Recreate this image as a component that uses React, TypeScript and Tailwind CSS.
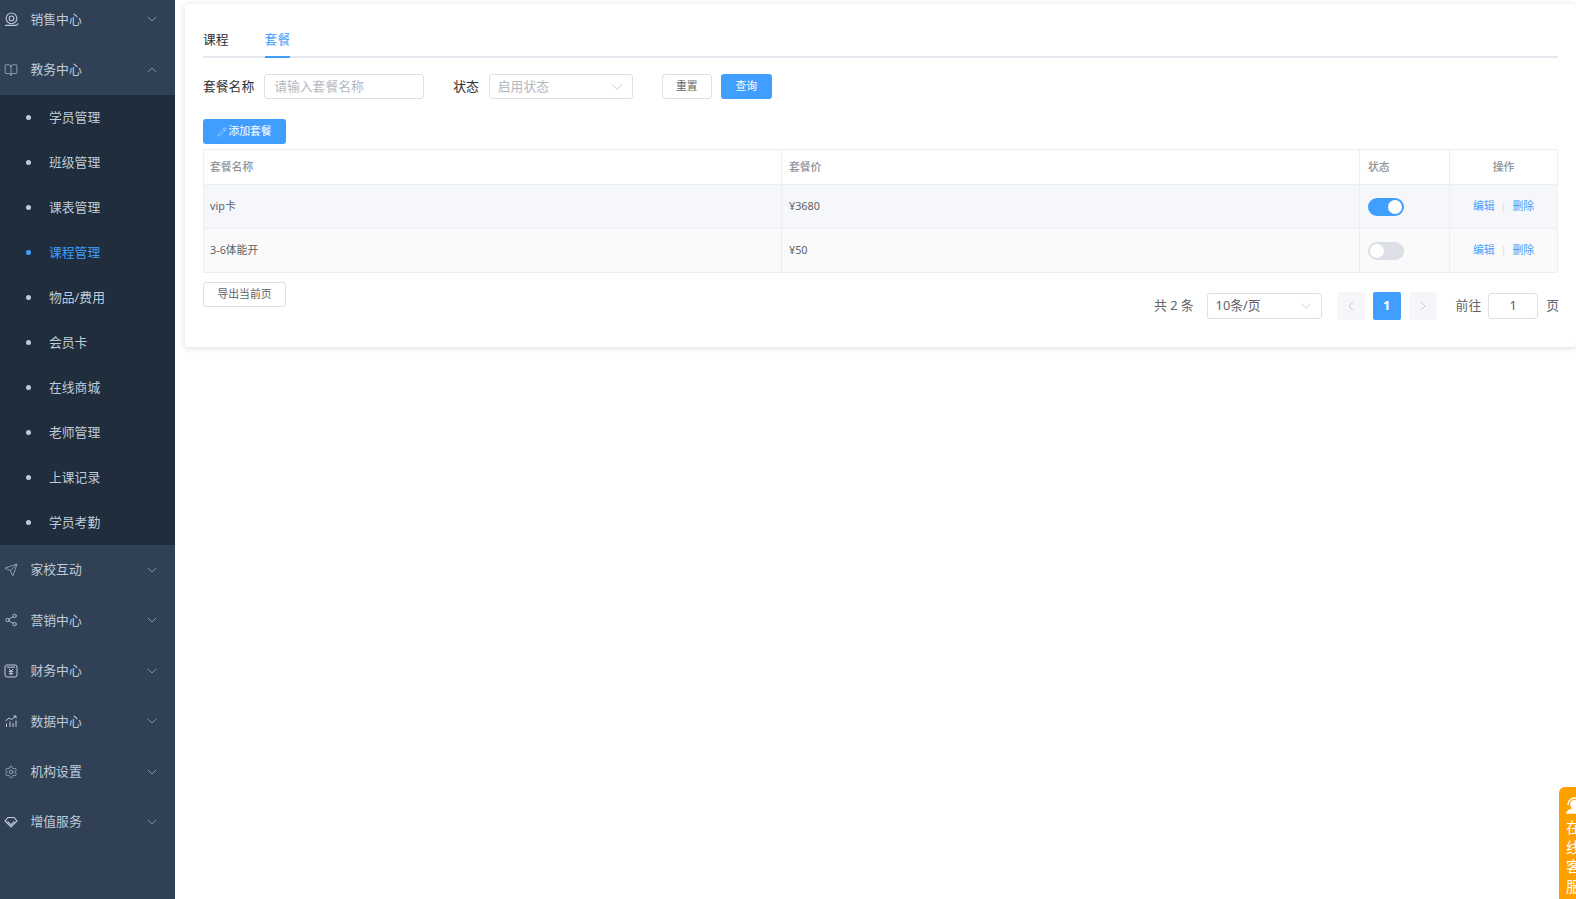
import React from "react";
import { ChevronDown, ChevronUp, ChevronLeft, ChevronRight, BookOpen, Send, Share2, Settings, Pencil } from "lucide-react";

const font = { fontFamily: '"Noto Sans", "Noto Sans CJK SC", sans-serif' };

const HeadIcon = () => (
  <svg width="15" height="15" viewBox="0 0 14 14" fill="none" stroke="currentColor" strokeWidth="1">
    <circle cx="7" cy="6" r="5" />
    <circle cx="7" cy="6" r="2.2" />
    <path d="M1 12.5h9.5c1.5 0 2.5-.8 2.5-2" />
  </svg>
);

const YenIcon = () => (
  <svg width="14" height="14" viewBox="0 0 14 14" fill="none" stroke="currentColor" strokeWidth="1">
    <rect x="1" y="1" width="12" height="12" rx="2" />
    <path d="M3 3.2h8M5 5l2 2.2L9 5M4.8 7.6h4.4M4.8 9.6h4.4M7 7.2v4" />
  </svg>
);

const ChartIcon = () => (
  <svg width="14" height="14" viewBox="0 0 14 14" fill="none" stroke="currentColor" strokeWidth="1">
    <path d="M1.5 7l3.5-3 2.5 1.5L12 2M9.5 2H12v2.5M2.5 13V9.5M6 13V7.5M9 13V9M12 13V6.5" />
  </svg>
);

const GemIcon = () => (
  <svg width="14" height="14" viewBox="0 0 14 14" fill="none" stroke="currentColor" strokeWidth="1.1">
    <path d="M4 2.5h6L13 6l-6 6-6-6z" />
    <path d="M3.5 6.5L7 10l3.5-3.5" />
  </svg>
);

const SupportIcon = () => (
  <svg width="18" height="18" viewBox="0 0 18 18" fill="none" stroke="white" strokeWidth="1.6">
    <path d="M2 9c0-4 3-7 7-7s7 3 7 7" />
    <circle cx="9" cy="8.5" r="4" fill="white" />
    <path d="M1 17c1-3 4-4 8-4s7 1 8 4z" fill="white" />
  </svg>
);

const thin = { size: 14, strokeWidth: 1.1 };

const topMenus = [
  { name: "销售中心", icon: <HeadIcon /> },
  { name: "教务中心", icon: <BookOpen {...thin} />, open: true },
];

const subMenus = ["学员管理", "班级管理", "课表管理", "课程管理", "物品/费用", "会员卡", "在线商城", "老师管理", "上课记录", "学员考勤"];

const bottomMenus = [
  { name: "家校互动", icon: <Send {...thin} /> },
  { name: "营销中心", icon: <Share2 size={14} strokeWidth={1.4} /> },
  { name: "财务中心", icon: <YenIcon /> },
  { name: "数据中心", icon: <ChartIcon /> },
  { name: "机构设置", icon: <Settings {...thin} /> },
  { name: "增值服务", icon: <GemIcon /> },
];

const MenuRow = ({ name, icon, open }: any) => (
  <div className="flex items-center h-[50.4px] pl-[4px] pr-[15px] text-[12.8px] text-[#bfcbd9]">
    <span className="w-[26.5px] flex items-center">{icon}</span>
    <span className="flex-1">{name}</span>
    {open ? <ChevronUp size={16} strokeWidth={0.9} /> : <ChevronDown size={16} strokeWidth={0.9} />}
  </div>
);

const Sidebar = () => (
  <aside className="w-[175px] shrink-0 h-full bg-[#304156] overflow-hidden">
    <div className="-mt-[6px]">
      {topMenus.map((m) => (
        <MenuRow key={m.name} {...m} />
      ))}
      <div className="bg-[#1f2d3d]">
        {subMenus.map((s) => (
          <div
            key={s}
            className={`flex items-center h-[45px] pl-[26px] text-[12.8px] ${s === "课程管理" ? "text-[#409eff]" : "text-[#bfcbd9]"}`}
          >
            <span className={`w-[5px] h-[5px] rounded-full mr-[18px] ${s === "课程管理" ? "bg-[#409eff]" : "bg-[#bfcbd9]"}`}></span>
            {s}
          </div>
        ))}
      </div>
      {bottomMenus.map((m) => (
        <MenuRow key={m.name} {...m} />
      ))}
    </div>
  </aside>
);

const rows = [
  { name: "vip卡", price: "¥3680", on: true, bg: "bg-[#f5f7fa]" },
  { name: "3-6体能开", price: "¥50", on: false, bg: "bg-[#fafafa]" },
];

const Table = () => (
  <table className="w-[1355px] table-fixed border-collapse text-[10.8px] text-[#606266]">
    <thead>
      <tr className="h-[35px] text-[#909399] font-medium">
        <th className="w-[578px] border border-[#ebeef5] px-[6px] text-left font-medium">套餐名称</th>
        <th className="w-[578px] border border-[#ebeef5] px-[7px] text-left font-medium">套餐价</th>
        <th className="w-[90px] border border-[#ebeef5] px-[8px] text-left font-medium">状态</th>
        <th className="border border-[#ebeef5] text-center font-medium">操作</th>
      </tr>
    </thead>
    <tbody>
      {rows.map((r) => (
        <tr key={r.name} className={`h-[44px] ${r.bg}`}>
          <td className="border border-[#ebeef5] px-[6px]">{r.name}</td>
          <td className="border border-[#ebeef5] px-[7px]">{r.price}</td>
          <td className="border border-[#ebeef5] px-[8px]">
            <div className={`w-[36px] h-[18px] rounded-full p-[2px] flex ${r.on ? "bg-[#409eff] justify-end" : "bg-[#dcdfe6] justify-start"}`}>
              <span className="w-[14px] h-[14px] rounded-full bg-white"></span>
            </div>
          </td>
          <td className="border border-[#ebeef5] text-center text-[#409eff]">
            编辑<span className="mx-[6px] text-[#dcdfe6]">|</span>删除
          </td>
        </tr>
      ))}
    </tbody>
  </table>
);

const Pagination = () => (
  <div className="flex items-center justify-end text-[12.8px] text-[#606266] mt-[-15px] -mr-[1px]">
    <span>共 2 条</span>
    <div className="ml-[13px] w-[115px] h-[26px] border border-[#dcdfe6] rounded-[3px] flex items-center justify-between pl-[8px] pr-[6px]">
      <span>10条/页</span>
      <ChevronDown size={18} strokeWidth={0.9} className="text-[#b4b8c0]" />
    </div>
    <div className="ml-[15px] w-[28px] h-[28px] rounded-[2px] bg-[#f4f6fa] flex items-center justify-center text-[#b4b8c0]">
      <ChevronLeft size={16} strokeWidth={1} />
    </div>
    <div className="ml-[8px] w-[28px] h-[28px] rounded-[2px] bg-[#409eff] flex items-center justify-center text-white font-bold">1</div>
    <div className="ml-[8px] w-[28px] h-[28px] rounded-[2px] bg-[#f4f6fa] flex items-center justify-center text-[#b4b8c0]">
      <ChevronRight size={16} strokeWidth={1} />
    </div>
    <span className="ml-[19px]">前往</span>
    <div className="ml-[7px] w-[50px] h-[26px] border border-[#dcdfe6] rounded-[3px] flex items-center justify-center">1</div>
    <span className="ml-[8px]">页</span>
  </div>
);

const Card = () => (
  <div className="bg-white rounded-[4px] shadow-[0_1px_6px_rgba(0,0,0,0.15)] h-[343px] px-[18px] pt-[22px]">
    <div className="flex h-[32px] border-b-2 border-[#e4e7ed] text-[12.8px] text-[#303133]">
      <div className="h-[32px] pt-[4px]">课程</div>
      <div className="h-[32px] pt-[4px] ml-[36px] text-[#409eff] border-b-2 border-[#409eff]">套餐</div>
    </div>
    <div className="flex items-center mt-[16px] text-[12.8px] text-[#303133]">
      <span>套餐名称</span>
      <div className="ml-[10px] w-[160px] h-[25px] border border-[#dcdfe6] rounded-[3px] pl-[9px] flex items-center text-[#b4b8c0]">请输入套餐名称</div>
      <span className="ml-[29px]">状态</span>
      <div className="ml-[10px] w-[144px] h-[25px] border border-[#dcdfe6] rounded-[3px] pl-[8px] pr-[6px] flex items-center justify-between text-[#b4b8c0]">
        <span>启用状态</span>
        <ChevronDown size={18} strokeWidth={0.9} />
      </div>
      <button className="ml-[29px] w-[50px] h-[25px] border border-[#dcdfe6] rounded-[3px] text-[10.8px] text-[#606266]">重置</button>
      <button className="ml-[9px] w-[51px] h-[25px] bg-[#409eff] rounded-[3px] text-[10.8px] text-white">查询</button>
    </div>
    <button className="mt-[20px] w-[83px] h-[25px] bg-[#409eff] rounded-[3px] text-[10.8px] text-white flex items-center justify-center">
      <Pencil size={10} strokeWidth={1} className="mr-[1px]" />
      添加套餐
    </button>
    <div className="mt-[5px]">
      <Table />
    </div>
    <button className="mt-[9px] w-[83px] h-[25px] border border-[#dcdfe6] rounded-[3px] text-[10.8px] text-[#606266] block">导出当前页</button>
    <Pagination />
  </div>
);

export default function App() {
  return (
    <div style={font} className="flex h-[899px] w-[1576px] overflow-hidden bg-white relative">
      <Sidebar />
      <main className="flex-1 pl-[10px] pt-[4px]">
        <Card />
      </main>
      <div className="absolute left-[1559px] top-[787px] w-[30px] h-[130px] bg-[#ff9f00] rounded-tl-[6px] text-white text-[15px] leading-[19.5px] pl-[7px] pt-[9px]">
        <SupportIcon />
        <div className="mt-[4px]">在</div>
        <div>线</div>
        <div>客</div>
        <div>服</div>
      </div>
    </div>
  );
}
